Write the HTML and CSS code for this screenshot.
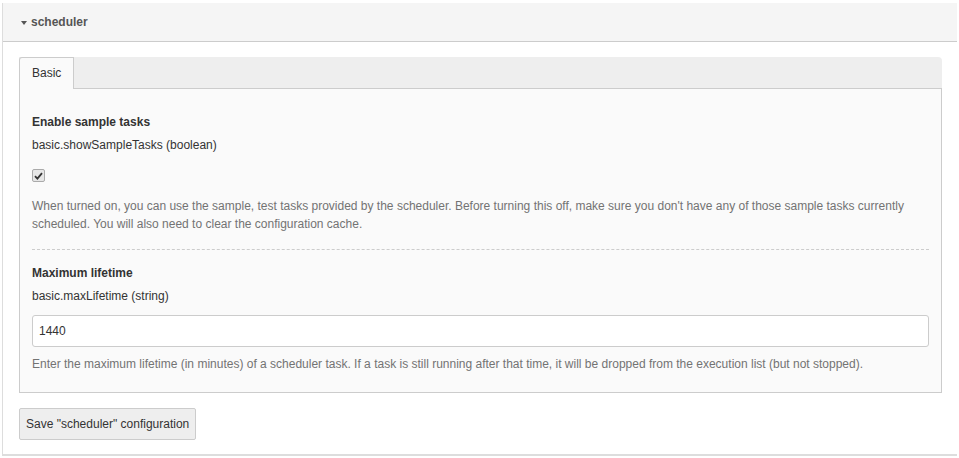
FILE: index.html
```html
<!DOCTYPE html>
<html lang="en">
<head>
  <meta charset="UTF-8" />
  <meta name="viewport" content="width=device-width, initial-scale=1.0"/>
  <title>Scheduler configuration</title>
  <link rel="stylesheet" href="styles.css">
</head>
<body>

  <div class="panel">
    <div class="panel-heading">
      <span class="caret"></span>
      <span class="panel-title">scheduler</span>
    </div>
    <div class="panel-body">
      <div class="tabs">
        <ul class="tab-nav">
          <li class="tab active">Basic</li>
        </ul>
        <div class="tab-pane">
          <div class="field">
            <div class="field-title">Enable sample tasks</div>
            <div class="field-key">basic.showSampleTasks (boolean)</div>
            <div class="field-value">
              <span class="checkbox">
                <svg width="9" height="8" viewBox="0 0 9 8"><path d="M1 4.2 L3.4 6.6 L8 1.2" fill="none" stroke="#333" stroke-width="1.8"/></svg>
              </span>
            </div>
            <div class="field-desc">When turned on, you can use the sample, test tasks provided by the scheduler. Before turning this off, make sure you don't have any of those sample tasks currently scheduled. You will also need to clear the configuration cache.</div>
          </div>
          <div class="field">
            <div class="field-title">Maximum lifetime</div>
            <div class="field-key">basic.maxLifetime (string)</div>
            <input type="text" class="text-input" value="1440">
            <div class="field-desc">Enter the maximum lifetime (in minutes) of a scheduler task. If a task is still running after that time, it will be dropped from the execution list (but not stopped).</div>
          </div>
        </div>
      </div>
      <button class="btn-save">Save "scheduler" configuration</button>
    </div>
  </div>

</body>
</html>
```

FILE: styles.css
```css
body {
  margin: 0;
  font-family: "Liberation Sans", Arial, sans-serif;
  font-size: 12px;
  line-height: 18px;
  color: #333;
  background: #fff;
}

.panel {
  margin: 3px 2px 0 2px;
  border-left: 1px solid #ddd;
  border-bottom: 2px solid #ddd;
}

.panel-heading {
  height: 38px;
  display: flex;
  align-items: center;
  gap: 4px;
  padding-left: 18px;
  background: #f5f5f5;
  border-bottom: 1px solid #ccc;
}

.caret {
  width: 0;
  height: 0;
  border-left: 3.5px solid transparent;
  border-right: 3.5px solid transparent;
  border-top: 4px solid #555;
  margin-top: 1px;
}

.panel-title {
  font-weight: bold;
  color: #555;
}

.panel-body {
  padding: 15px 15px 14px 16px;
}

.tab-nav {
  list-style: none;
  margin: 0;
  padding: 0;
  display: flex;
  height: 31px;
  background: #eee;
  border-top-right-radius: 4px;
}

.tab {
  padding: 6px 12px 6px 12px;
  height: 32px;
  box-sizing: border-box;
  border: 1px solid #ccc;
  border-bottom: none;
  border-top-left-radius: 3px;
  background: #fafafa;
  position: relative;
  z-index: 1;
}

.tab-pane {
  background: #fafafa;
  border: 1px solid #ccc;
  padding: 12px 12px 19px;
}

.field {
  padding-bottom: 16px;
}

.field:last-child {
  padding-bottom: 0;
}

.field + .field {
  border-top: 1px dashed #ccc;
}

.field-title {
  font-weight: bold;
  margin-top: 12px;
  margin-bottom: 5px;
}

.field + .field .field-title {
  margin-top: 14px;
}

.field-value {
  margin-top: 15px;
  height: 13px;
  display: flex;
}

.checkbox {
  width: 13px;
  height: 13px;
  box-sizing: border-box;
  border: 1px solid #aaa;
  border-radius: 2px;
  background: #e6e6e6;
  display: flex;
  align-items: center;
  justify-content: center;
}

.field-desc {
  margin-top: 15px;
  color: #737373;
}

.text-input {
  display: block;
  width: 100%;
  box-sizing: border-box;
  height: 32px;
  margin-top: 10px;
  padding: 0 6px;
  border: 1px solid #ccc;
  border-radius: 3px;
  background: #fff;
  font-family: inherit;
  font-size: 12px;
  color: #333;
}

.text-input + .field-desc {
  margin-top: 8px;
}

.btn-save {
  margin-top: 15px;
  height: 32px;
  padding: 0 6px;
  border: 1px solid #ccc;
  border-radius: 2px;
  background: #eee;
  font-family: inherit;
  font-size: 12px;
  color: #333;
  cursor: pointer;
}

.btn-save:hover {
  background: #e2e2e2;
}
```
